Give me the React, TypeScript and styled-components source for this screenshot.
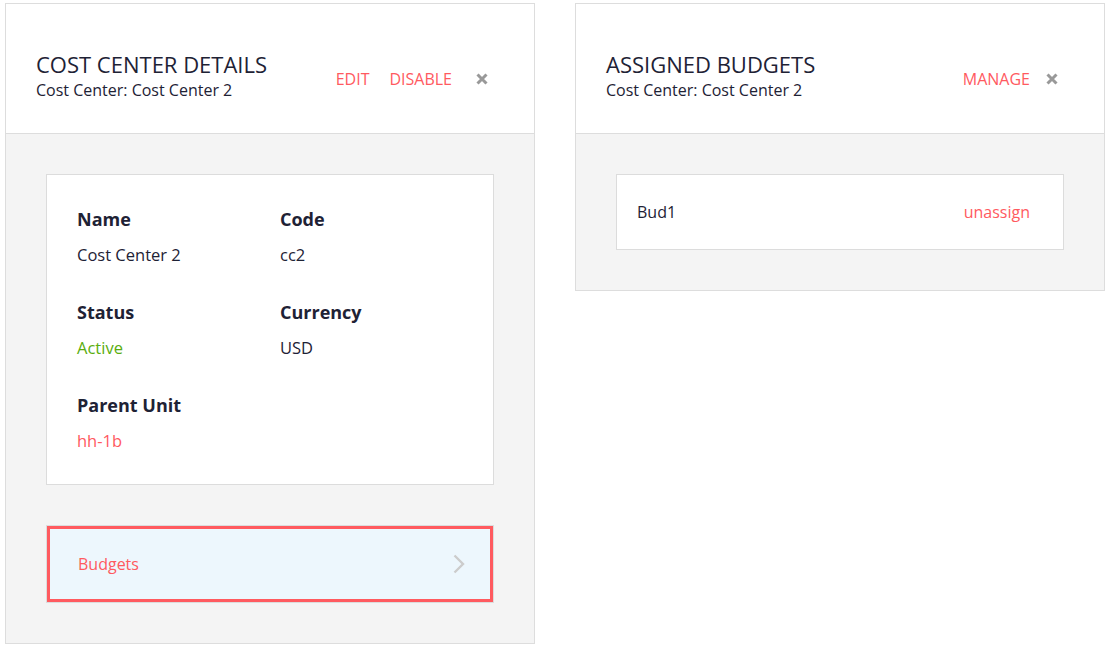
import React from "react";
import styled, { createGlobalStyle } from "styled-components";

const GlobalStyle = createGlobalStyle`
  html, body {
    margin: 0;
    padding: 0;
    background: #ffffff;
  }
  body {
    font-family: "Open Sans", "Noto Sans", Arial, sans-serif;
    color: #1e2235;
  }
  * {
    box-sizing: border-box;
  }
`;

const red = "#ff5a5f";

const Page = styled.div`
  display: flex;
  align-items: flex-start;
  gap: 40px;
  padding: 3px 0 0 5px;
`;

const Panel = styled.section`
  width: 530px;
  border: 1px solid #dddddd;
  background: #ffffff;
`;

const Header = styled.header`
  display: flex;
  align-items: flex-start;
  justify-content: space-between;
  height: 130px;
  padding: 47px 46px 0 30px;
  border-bottom: 1px solid #dddddd;
`;

const TitleBlock = styled.div`
  display: flex;
  flex-direction: column;
  gap: 2px;
`;

const Title = styled.h2`
  margin: 0;
  font-size: 22px;
  line-height: 26px;
  font-weight: 400;
  color: #1e2235;
`;

const Subtitle = styled.div`
  font-size: 16px;
  line-height: 22px;
  color: #1e2235;
`;

const Actions = styled.div`
  display: flex;
  align-items: center;
  margin-top: 17px;
  height: 22px;
`;

const ActionLink = styled.a`
  font-size: 16px;
  line-height: 22px;
  color: ${red};
  text-decoration: none;
  cursor: pointer;
  & + & {
    margin-left: 20px;
  }
`;

const CloseButton = styled.button<{ $gap: number }>`
  display: flex;
  align-items: center;
  justify-content: center;
  margin-left: ${(p) => p.$gap}px;
  padding: 0;
  width: 12px;
  height: 22px;
  border: none;
  background: none;
  cursor: pointer;
`;

const Body = styled.div`
  padding: 40px;
  background: #f4f4f4;
  display: flex;
  flex-direction: column;
  gap: 40px;
`;

const InfoCard = styled.div`
  background: #ffffff;
  border: 1px solid #dcdcdc;
  padding: 32px 30px 31px;
  display: grid;
  grid-template-columns: 203px 1fr;
  row-gap: 33px;
`;

const Field = styled.div`
  display: flex;
  flex-direction: column;
  gap: 12px;
`;

const Label = styled.div`
  font-size: 18px;
  line-height: 24px;
  font-weight: 700;
  color: #1e2235;
`;

const Value = styled.div<{ $tone?: "green" | "red" }>`
  font-size: 16.5px;
  line-height: 24px;
  color: ${(p) =>
    p.$tone === "green" ? "#5aad0e" : p.$tone === "red" ? red : "#1e2235"};
`;

const NavRow = styled.button`
  display: flex;
  align-items: center;
  justify-content: space-between;
  height: 78px;
  padding: 0 28px 0 31px;
  border: 1px solid #dcdcdc;
  box-shadow: inset 0 0 0 3px ${red};
  background: #edf7fd;
  font-family: inherit;
  font-size: 16px;
  color: ${red};
  text-align: left;
  cursor: pointer;
`;

const BudgetRow = styled.div`
  display: flex;
  align-items: center;
  justify-content: space-between;
  height: 76px;
  padding: 0 33px 0 20px;
  background: #ffffff;
  border: 1px solid #dcdcdc;
`;

const BudgetName = styled.span`
  font-size: 16px;
  color: #1e2235;
`;

const Unassign = styled.a`
  font-size: 16px;
  color: ${red};
  cursor: pointer;
`;

const CloseIcon = () => (
  <svg width="12" height="12" viewBox="0 0 12 12">
    <path
      d="M1.5 1.5 L10.5 10.5 M10.5 1.5 L1.5 10.5"
      stroke="#999999"
      strokeWidth="3"
      strokeLinecap="butt"
      fill="none"
    />
  </svg>
);

const Chevron = () => (
  <svg width="12" height="20" viewBox="0 0 12 20">
    <path
      d="M1.5 1.5 L10 10 L1.5 18.5"
      stroke="#cccccc"
      strokeWidth="2.4"
      fill="none"
    />
  </svg>
);

const details = [
  { label: "Name", value: "Cost Center 2" },
  { label: "Code", value: "cc2" },
  { label: "Status", value: "Active", tone: "green" as const },
  { label: "Currency", value: "USD" },
  { label: "Parent Unit", value: "hh-1b", tone: "red" as const },
];

export default function App() {
  return (
    <>
      <GlobalStyle />
      <Page>
        <Panel>
          <Header>
            <TitleBlock>
              <Title>COST CENTER DETAILS</Title>
              <Subtitle>Cost Center: Cost Center 2</Subtitle>
            </TitleBlock>
            <Actions>
              <ActionLink>EDIT</ActionLink>
              <ActionLink>DISABLE</ActionLink>
              <CloseButton $gap={24} aria-label="Close">
                <CloseIcon />
              </CloseButton>
            </Actions>
          </Header>
          <Body>
            <InfoCard>
              {details.map((d) => (
                <Field key={d.label}>
                  <Label>{d.label}</Label>
                  <Value $tone={d.tone}>{d.value}</Value>
                </Field>
              ))}
            </InfoCard>
            <NavRow>
              <span>Budgets</span>
              <Chevron />
            </NavRow>
          </Body>
        </Panel>

        <Panel>
          <Header>
            <TitleBlock>
              <Title>ASSIGNED BUDGETS</Title>
              <Subtitle>Cost Center: Cost Center 2</Subtitle>
            </TitleBlock>
            <Actions>
              <ActionLink>MANAGE</ActionLink>
              <CloseButton $gap={16} aria-label="Close">
                <CloseIcon />
              </CloseButton>
            </Actions>
          </Header>
          <Body>
            <BudgetRow>
              <BudgetName>Bud1</BudgetName>
              <Unassign>unassign</Unassign>
            </BudgetRow>
          </Body>
        </Panel>
      </Page>
    </>
  );
}
